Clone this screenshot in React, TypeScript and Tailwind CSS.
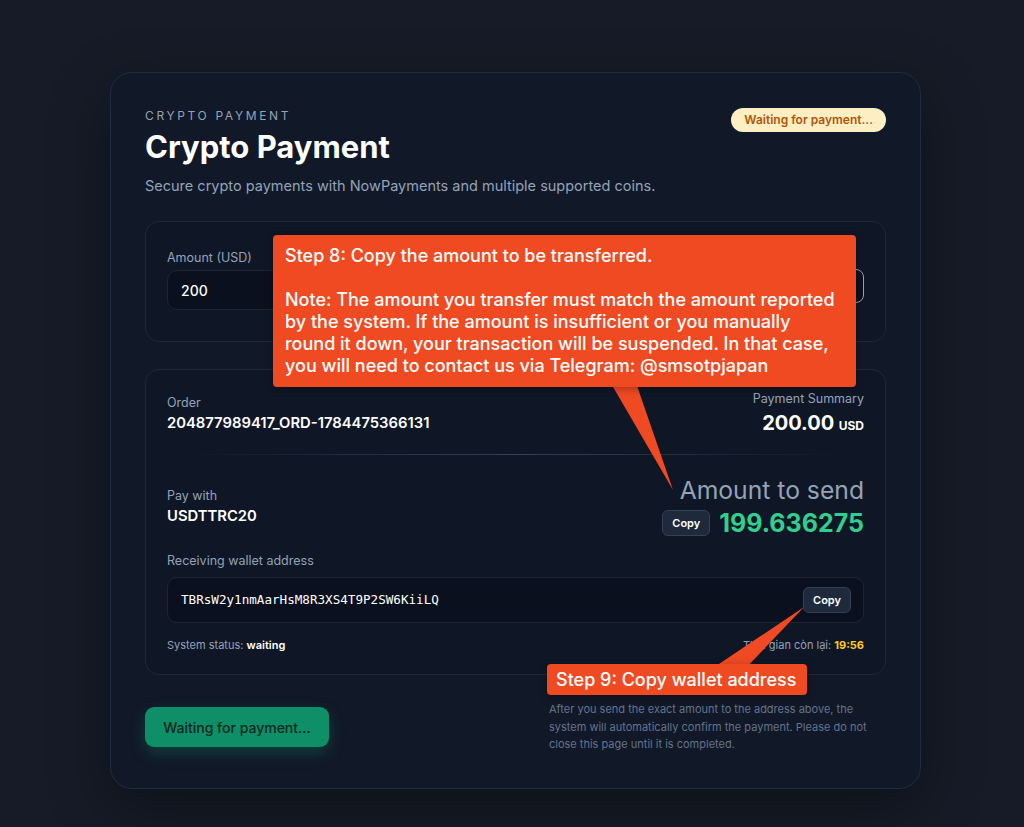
import React from "react";

export default function App() {
  return (
    <div
      className="relative w-[1024px] h-[827px] overflow-hidden bg-[#161b27] text-white"
      style={{ fontFamily: "Inter, 'Noto Sans', sans-serif" }}
    >
      <div className="pt-[72px] pl-[110px]">
        <div className="w-[811px] rounded-[22px] border border-[#222b3d] bg-[#111827] px-[34px] pt-[34px] pb-[34px] shadow-[0_20px_60px_rgba(0,0,0,0.35)]">
          {/* Header */}
          <div className="flex items-start justify-between">
            <div>
              <div className="text-[12px] leading-[18px] tracking-[0.22em] text-[#94a3b8]">CRYPTO PAYMENT</div>
              <h1 className="mt-[4px] text-[31px] font-bold leading-[36px] text-white">Crypto Payment</h1>
              <p className="mt-[11px] text-[14.5px] leading-[20px] text-[#94a3b8]">
                Secure crypto payments with NowPayments and multiple supported coins.
              </p>
            </div>
            <div className="mt-[1px] rounded-full bg-[#fdefc4] px-[13px] py-[4px] text-[12px] font-semibold leading-[16px] text-[#b45309]">
              Waiting for payment...
            </div>
          </div>

          {/* Amount box */}
          <div className="mt-[25px] rounded-[14px] border border-[#1f2839] bg-[#0f1626] px-[21px] pt-[27px] pb-[31px]">
            <div className="grid grid-cols-2 gap-4">
              <div>
                <div className="text-[12.5px] leading-[18px] text-[#94a3b8]">Amount (USD)</div>
                <div className="mt-[3px] flex h-[40px] items-center rounded-[10px] border border-[#1c2536] bg-[#0a101d] px-[13px] text-[14px] font-medium text-white">
                  200
                </div>
              </div>
              <div>
                <div className="text-[12.5px] leading-[18px] text-[#94a3b8]">Coin</div>
                <div className="mt-[2px] flex h-[34px] items-center rounded-[8px] border border-[#94a3b8] bg-[#0a101d] px-[13px] text-[14px] text-white">
                  USDTTRC20
                </div>
              </div>
            </div>
          </div>

          {/* Details box */}
          <div className="mt-[27px] rounded-[14px] border border-[#1f2839] bg-[#0f1626] px-[21px] pt-[20px] pb-[21px]">
            <div className="flex items-start justify-between">
              <div className="mt-[4px]">
                <div className="text-[12.5px] leading-[18px] text-[#94a3b8]">Order</div>
                <div className="mt-[1px] text-[14.8px] font-semibold leading-[20px] text-white">
                  204877989417_ORD-1784475366131
                </div>
              </div>
              <div className="text-right">
                <div className="text-[12.5px] leading-[18px] text-[#94a3b8]">Payment Summary</div>
                <div className="mt-[2px] leading-[26px] text-white">
                  <span className="text-[20px] font-bold">200.00</span>{" "}
                  <span className="text-[12px] font-bold">USD</span>
                </div>
              </div>
            </div>

            <div className="mx-[12px] mt-[15px] h-px bg-gradient-to-r from-transparent via-[#334155] to-transparent" />

            <div className="mt-[20px] flex items-start justify-between">
              <div className="mt-[12px]">
                <div className="text-[12.5px] leading-[18px] text-[#94a3b8]">Pay with</div>
                <div className="mt-[1px] text-[14.8px] font-semibold leading-[20px] text-white">USDTTRC20</div>
              </div>
              <div className="flex flex-col items-end">
                <div className="text-[24.7px] leading-[30px] text-[#94a3b8]">Amount to send</div>
                <div className="mt-[3px] flex items-center gap-[9px]">
                  <button className="h-[26px] rounded-[6px] border border-[#334155] bg-[#1e293b] px-[9px] text-[11px] font-semibold text-white">
                    Copy
                  </button>
                  <span className="text-[25px] font-bold leading-[30px] text-[#2fd08f]">199.636275</span>
                </div>
              </div>
            </div>

            <div className="mt-[14px] text-[12.5px] leading-[18px] text-[#94a3b8]">Receiving wallet address</div>
            <div className="mt-[7px] flex h-[46px] items-center justify-between rounded-[10px] border border-[#1c2536] bg-[#0a101d] pl-[13px] pr-[12px]">
              <span
                className="text-[12.6px] text-white"
                style={{ fontFamily: "'DejaVu Sans Mono', 'Liberation Mono', monospace" }}
              >
                TBRsW2y1nmAarHsM8R3XS4T9P2SW6KiiLQ
              </span>
              <button className="h-[26px] rounded-[6px] border border-[#334155] bg-[#1e293b] px-[9px] text-[11px] font-semibold text-white">
                Copy
              </button>
            </div>

            <div className="mt-[14px] flex items-center justify-between text-[11px] leading-[16px] text-[#94a3b8]">
              <div>
                System status: <span className="font-semibold text-white">waiting</span>
              </div>
              <div>
                Thời gian còn lại: <span className="font-bold text-[#facc15]">19:56</span>
              </div>
            </div>
          </div>

          {/* Bottom */}
          <div className="mt-[26px] flex items-start justify-between">
            <button className="mt-[6px] h-[40px] w-[184px] rounded-[9px] bg-[#0e8f68] text-[14px] font-medium text-[#08271f] shadow-[0_6px_16px_rgba(16,185,129,0.25)]">
              Waiting for payment...
            </button>
            <p className="w-[337px] text-[11px] leading-[17.5px] text-[#64748b]">
              After you send the exact amount to the address above, the system will automatically confirm the payment. Please do not close this page until it is completed.
            </p>
          </div>
        </div>
      </div>

      {/* Callout tails */}
      <svg className="absolute left-0 top-0" width="1024" height="827" style={{ pointerEvents: "none" }}>
        <polygon points="609,380 635,380 673,490" fill="#f04a23" />
        <polygon points="710,670 744,670 804,607" fill="#f04a23" />
      </svg>

      {/* Callout 1 */}
      <div className="absolute left-[273px] top-[235px] h-[152px] w-[583px] rounded-[4px] bg-[#f04a23] px-[12px] pt-[10px] text-[18px] font-medium leading-[22px] text-white shadow-[0_2px_8px_rgba(0,0,0,0.3)]">
        <div>Step 8: Copy the amount to be transferred.</div>
        <div className="h-[22px]" />
        <div>Note: The amount you transfer must match the amount reported</div>
        <div>by the system. If the amount is insufficient or you manually</div>
        <div>round it down, your transaction will be suspended. In that case,</div>
        <div>you will need to contact us via Telegram: @smsotpjapan</div>
      </div>

      {/* Callout 2 */}
      <div className="absolute left-[547px] top-[664px] flex h-[31px] w-[260px] items-center rounded-[4px] bg-[#f04a23] px-[9px] text-[18px] font-medium text-white shadow-[0_2px_8px_rgba(0,0,0,0.3)]">
        Step 9: Copy wallet address
      </div>
    </div>
  );
}
